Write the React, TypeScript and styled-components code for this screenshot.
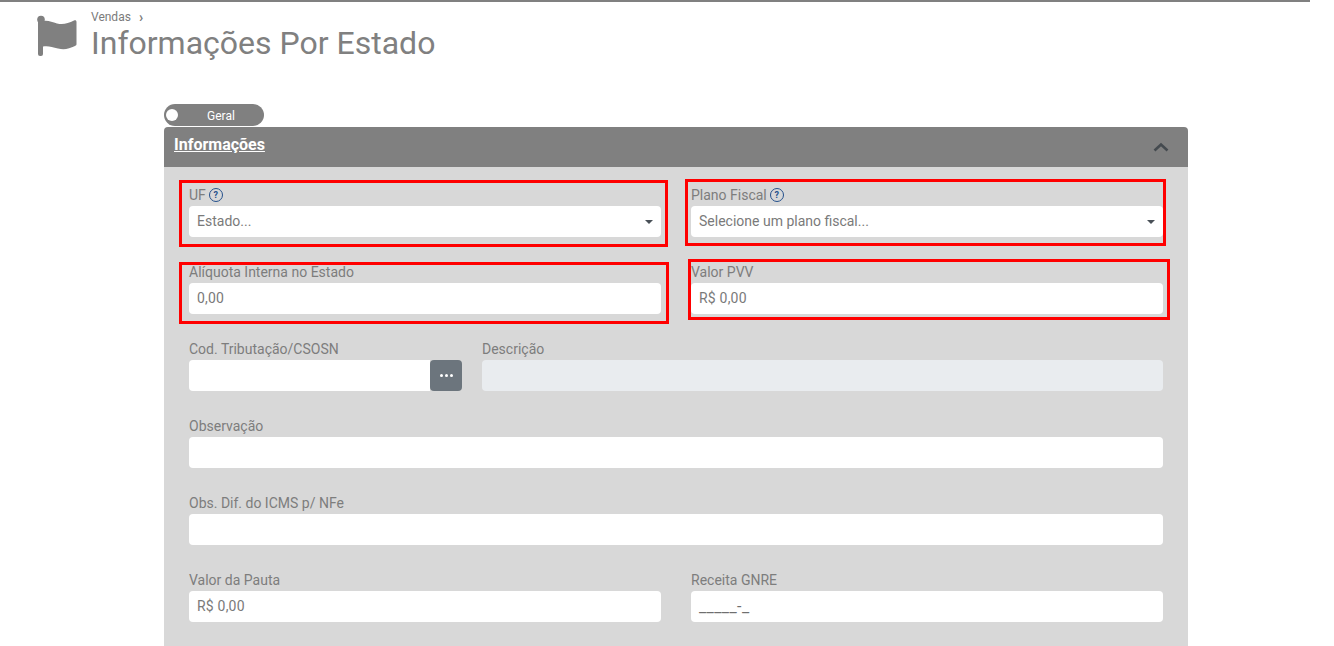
import React from "react";
import styled, { createGlobalStyle } from "styled-components";

const GlobalStyle = createGlobalStyle`
  html, body {
    margin: 0;
    padding: 0;
    height: 646px;
    overflow: hidden;
    background: #ffffff;
    font-family: Roboto, "Liberation Sans", sans-serif;
  }
  * {
    box-sizing: border-box;
  }
`;

const Page = styled.div`
  width: 1334px;
  height: 646px;
  overflow: hidden;
`;

const TopLine = styled.div`
  width: 1310px;
  height: 2px;
  background: #808080;
`;

const PageHeader = styled.header`
  display: flex;
  align-items: flex-start;
  gap: 14px;
  height: 102px;
  padding: 8px 0 0 37px;
`;

const FlagIcon = styled.svg`
  width: 40px;
  height: 42px;
  margin-top: 5px;
  flex-shrink: 0;
  color: #808080;
`;

const TitleBlock = styled.div`
  display: flex;
  flex-direction: column;
`;

const Breadcrumb = styled.div`
  display: flex;
  align-items: center;
  gap: 8px;
  height: 14px;
  font-size: 12px;
  line-height: 14px;
  color: #7b7b7b;
`;

const BreadcrumbArrow = styled.span`
  font-size: 14px;
  font-weight: 700;
`;

const Title = styled.h1`
  margin: 0;
  font-size: 32px;
  line-height: 38px;
  font-weight: 400;
  color: #808080;
`;

const Content = styled.main`
  width: 1024px;
  margin-left: 164px;
`;

const TabToggle = styled.div`
  position: relative;
  display: flex;
  align-items: center;
  justify-content: center;
  width: 100px;
  height: 22px;
  margin-bottom: 1px;
  padding: 2px 0 0 14px;
  border-radius: 11px;
  background: #808080;
  color: #ffffff;
  font-size: 12px;
`;

const Knob = styled.span`
  position: absolute;
  left: 2px;
  top: 5px;
  width: 12px;
  height: 12px;
  border-radius: 50%;
  background: #ffffff;
`;

const CardHeader = styled.div`
  display: flex;
  align-items: center;
  justify-content: space-between;
  height: 40px;
  padding: 0 19px 6px 10px;
  border-radius: 4px 4px 0 0;
  background: #808080;
`;

const CardTitle = styled.span`
  color: #ffffff;
  font-size: 16px;
  font-weight: 700;
  text-decoration: underline;
`;

const Chevron = styled.svg`
  width: 16px;
  height: 10px;
  margin-top: 6px;
  color: #444a4f;
`;

const Form = styled.div`
  display: grid;
  grid-template-columns: 472px 472px;
  column-gap: 30px;
  row-gap: 26px;
  height: 480px;
  align-content: start;
  padding: 19px 25px 0;
  background: #d8d8d8;
`;

const Field = styled.div<{ $wide?: boolean }>`
  position: relative;
  display: flex;
  flex-direction: column;
  grid-column: ${({ $wide }) => ($wide ? "1 / -1" : "auto")};
  min-width: 0;
`;

const Label = styled.label`
  display: flex;
  align-items: center;
  gap: 3px;
  height: 20px;
  padding-bottom: 2px;
  font-size: 14px;
  color: #7d7d7d;
`;

const HelpIcon = styled.span`
  display: inline-flex;
  align-items: center;
  justify-content: center;
  width: 14px;
  height: 14px;
  border: 1.3px solid #24508c;
  border-radius: 50%;
  color: #24508c;
  font-size: 9px;
  font-weight: 700;
`;

const Input = styled.div`
  display: flex;
  align-items: center;
  justify-content: space-between;
  height: 31px;
  padding: 0 12px 2px 8px;
  border-radius: 4px;
  background: #ffffff;
  color: #7a7a7a;
  font-size: 14px;
  letter-spacing: 0.2px;
`;

const SelectInput = styled(Input)`
  letter-spacing: 0;
`;

const Caret = styled.span`
  width: 0;
  height: 0;
  margin-right: -4px;
  margin-top: 2px;
  border-left: 4px solid transparent;
  border-right: 4px solid transparent;
  border-top: 4px solid #495057;
`;

const SplitRow = styled.div`
  grid-column: 1 / -1;
  display: grid;
  grid-template-columns: 273px 1fr;
  column-gap: 20px;
`;

const InputGroup = styled.div`
  display: flex;
`;

const GroupInput = styled(Input)`
  flex: 1;
  border-radius: 4px 0 0 4px;
`;

const DotsButton = styled.div`
  display: flex;
  align-items: center;
  justify-content: center;
  gap: 2px;
  width: 32px;
  height: 31px;
  border-radius: 4px;
  background: #6c757d;
`;

const Dot = styled.span`
  width: 3px;
  height: 3px;
  border-radius: 50%;
  background: #ffffff;
`;

const ReadOnlyInput = styled(Input)`
  background: #e9ecef;
`;

const MaskText = styled.span`
  padding-top: 1px;
  font-size: 16px;
  color: #6f6f6f;
  letter-spacing: 0.4px;
`;

const Highlight = styled.div<{ $top: number; $right: number; $bottom: number; $left: number }>`
  position: absolute;
  top: ${({ $top }) => $top}px;
  right: ${({ $right }) => $right}px;
  bottom: ${({ $bottom }) => $bottom}px;
  left: ${({ $left }) => $left}px;
  border: 3px solid #ff0000;
  pointer-events: none;
`;

const App: React.FC = () => {
  return (
    <Page>
      <GlobalStyle />
      <TopLine />
      <PageHeader>
        <FlagIcon viewBox="0 0 40 42" fill="currentColor">
          <circle cx="4" cy="4.5" r="3.8" />
          <rect x="1" y="5" width="5" height="36" rx="2" />
          <path d="M6 6C11 5 15 7 20 8.5C26 10 31 8.5 37 5.5C38.5 4.8 39.5 5.5 39.5 7V29C39.5 30 39 30.5 38 31C32 34 27 35 21 33.5C15 32 11 30.5 6 31.5Z" />
        </FlagIcon>
        <TitleBlock>
          <Breadcrumb>
            <span>Vendas</span>
            <BreadcrumbArrow>›</BreadcrumbArrow>
          </Breadcrumb>
          <Title>Informações Por Estado</Title>
        </TitleBlock>
      </PageHeader>
      <Content>
        <TabToggle>
          <Knob />
          Geral
        </TabToggle>
        <CardHeader>
          <CardTitle>Informações</CardTitle>
          <Chevron viewBox="0 0 16 10" fill="none" stroke="currentColor" strokeWidth="2.6">
            <path d="M1.5 8.5L8 2.5L14.5 8.5" />
          </Chevron>
        </CardHeader>
        <Form>
          <Field>
            <Label>
              UF <HelpIcon>?</HelpIcon>
            </Label>
            <SelectInput>
              Estado...
              <Caret />
            </SelectInput>
            <Highlight $top={-6} $right={-7} $bottom={-10} $left={-10} />
          </Field>
          <Field>
            <Label>
              Plano Fiscal <HelpIcon>?</HelpIcon>
            </Label>
            <SelectInput>
              Selecione um plano fiscal...
              <Caret />
            </SelectInput>
            <Highlight $top={-7} $right={-3} $bottom={-9} $left={-6} />
          </Field>
          <Field>
            <Label>Alíquota Interna no Estado</Label>
            <Input>0,00</Input>
            <Highlight $top={-1} $right={-8} $bottom={-10} $left={-10} />
          </Field>
          <Field>
            <Label>Valor PVV</Label>
            <Input>R$ 0,00</Input>
            <Highlight $top={-4} $right={-7} $bottom={-6} $left={-3} />
          </Field>
          <SplitRow>
            <Field>
              <Label>Cod. Tributação/CSOSN</Label>
              <InputGroup>
                <GroupInput />
                <DotsButton>
                  <Dot />
                  <Dot />
                  <Dot />
                </DotsButton>
              </InputGroup>
            </Field>
            <Field>
              <Label>Descrição</Label>
              <ReadOnlyInput />
            </Field>
          </SplitRow>
          <Field $wide>
            <Label>Observação</Label>
            <Input />
          </Field>
          <Field $wide>
            <Label>Obs. Dif. do ICMS p/ NFe</Label>
            <Input />
          </Field>
          <Field>
            <Label>Valor da Pauta</Label>
            <Input>R$ 0,00</Input>
          </Field>
          <Field>
            <Label>Receita GNRE</Label>
            <Input>
              <MaskText>_____-_</MaskText>
            </Input>
          </Field>
        </Form>
      </Content>
    </Page>
  );
};

export default App;
